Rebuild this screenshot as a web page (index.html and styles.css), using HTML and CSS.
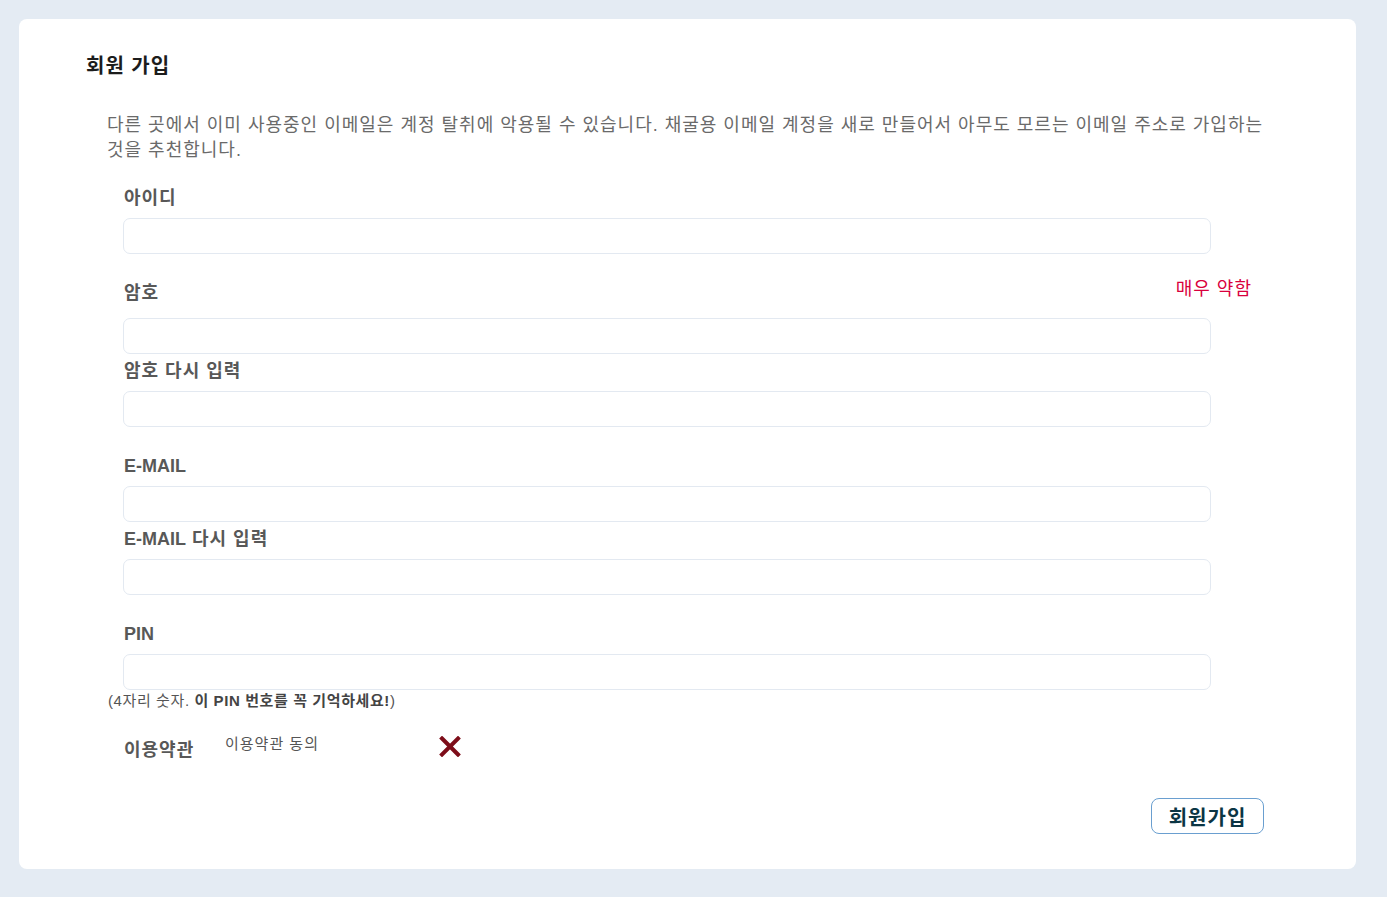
FILE: index.html
```html
<!DOCTYPE html>
<html lang="ko">
<head>
    <meta charset="UTF-8">
    <meta name="viewport" content="width=device-width, initial-scale=1.0">
    <title>회원 가입</title>
    <link rel="stylesheet" href="styles.css">
</head>
<body>
    <div class="card">
        <h1 class="title">회원 가입</h1>
        <p class="notice">다른 곳에서 이미 사용중인 이메일은 계정 탈취에 악용될 수 있습니다. 채굴용 이메일 계정을 새로 만들어서 아무도 모르는 이메일 주소로 가입하는 것을 추천합니다.</p>
        <form class="form">
            <div class="field">
                <label class="label" for="userid">아이디</label>
                <input class="input" type="text" id="userid">
            </div>
            <div class="field">
                <div class="label-row">
                    <label class="label" for="pw">암호</label>
                    <span class="strength">매우 약함</span>
                </div>
                <input class="input" type="password" id="pw">
            </div>
            <div class="field pair">
                <label class="label" for="pw2">암호 다시 입력</label>
                <input class="input" type="password" id="pw2">
            </div>
            <div class="field">
                <label class="label" for="email"><span class="latin">E-MAIL</span></label>
                <input class="input" type="text" id="email">
            </div>
            <div class="field pair">
                <label class="label" for="email2"><span class="latin">E-MAIL</span> 다시 입력</label>
                <input class="input" type="text" id="email2">
            </div>
            <div class="field">
                <label class="label" for="pin"><span class="latin">PIN</span></label>
                <input class="input" type="password" id="pin">
            </div>
            <div class="hint">(4자리 숫자. <b>이 PIN 번호를 꼭 기억하세요!</b>)</div>
            <div class="terms">
                <span class="label">이용약관</span>
                <span class="terms-text">이용약관 동의</span>
                <svg class="terms-mark" width="22" height="21" viewBox="0 0 22 21">
                    <path d="M3 2.5 L19 18.5 M19 2.5 L3 18.5" stroke="#7d0d19" stroke-width="4" stroke-linecap="square" fill="none"/>
                </svg>
            </div>
            <div class="actions">
                <button class="btn" type="button">회원가입</button>
            </div>
        </form>
    </div>
</body>
</html>
```

FILE: styles.css
```css
body {
    margin: 0;
    padding: 19px 31px 27px 19px;
    background-color: #e4ebf3;
    font-family: 'Liberation Sans', 'Noto Sans CJK KR', sans-serif;
}
.card {
    background: #fff;
    border-radius: 8px;
    padding: 33px 92px 35px 67px;
}
.title {
    margin: 0;
    font-size: 20px;
    line-height: 28px;
    font-weight: bold;
    letter-spacing: 1px;
    color: #1c1c1c;
}
.notice {
    margin: 33px -20px 0 21px;
    font-size: 18px;
    line-height: 25px;
    letter-spacing: 1px;
    color: #6a6a6a;
}
.form {
    margin: 23px 0 0 37px;
}
.field {
    margin-top: 27px;
}
.field:first-child {
    margin-top: 0;
}
.field.pair {
    margin-top: 5px;
}
.label {
    display: block;
    margin: 0 0 8px 1px;
    font-size: 18px;
    line-height: 24px;
    font-weight: bold;
    letter-spacing: 1px;
    color: #585858;
}
.latin {
    letter-spacing: 0;
}
.label-row {
    display: flex;
    justify-content: space-between;
    align-items: flex-start;
    margin-bottom: 13px;
}
.label-row .label {
    margin: 0 0 0 1px;
}
.strength {
    margin-right: 12px;
    margin-top: -4px;
    font-size: 18px;
    line-height: 24px;
    letter-spacing: 1px;
    color: #d9003d;
}
.input {
    display: block;
    box-sizing: border-box;
    width: 1088px;
    height: 36px;
    margin: 0;
    border: 1px solid #e3e9f1;
    border-radius: 7px;
    background: #fff;
    outline: none;
}
.hint {
    margin: 2px 0 0 -15px;
    font-size: 15px;
    line-height: 18px;
    letter-spacing: 0.6px;
    color: #555;
}
.hint b {
    color: #444;
}
.terms {
    display: flex;
    align-items: center;
    margin-top: 20px;
}
.terms .label {
    width: 101px;
    margin: 8px 0 0 1px;
}
.terms-text {
    width: 214px;
    margin-top: -8px;
    font-size: 15px;
    letter-spacing: 1px;
    color: #555;
}
.actions {
    display: flex;
    justify-content: flex-end;
    margin-top: 36px;
}
.btn {
    width: 113px;
    height: 36px;
    padding: 0;
    border: 1px solid #6a9fd0;
    border-radius: 8px;
    background: #fff;
    font-family: inherit;
    font-size: 20px;
    font-weight: bold;
    letter-spacing: 1px;
    color: #0b3544;
    cursor: pointer;
}
```
